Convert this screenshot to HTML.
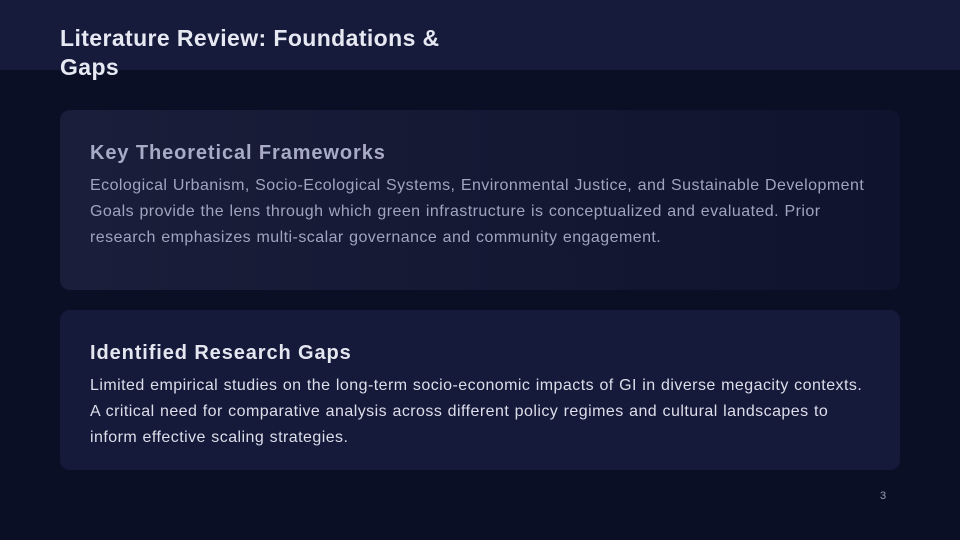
<!DOCTYPE html>
<html><head><meta charset="utf-8"><style>
*{margin:0;padding:0;box-sizing:border-box}
body{width:960px;height:540px;background:#0b0f26;font-family:"Liberation Sans",sans-serif;position:relative;overflow:hidden}
.top{position:absolute;left:0;top:0;width:960px;height:70px;background:#161a3b}
h1{position:absolute;left:60px;top:24px;width:420px;color:#e6e8f2;font-size:23px;line-height:29px;font-weight:bold;letter-spacing:0.4px}
.card{position:absolute;left:60px;width:840px;border-radius:10px;padding:0 30px}
.c1{top:110px;height:180px;background:linear-gradient(90deg,#1a1e3a,#0f132d);}
.c2{top:310px;height:160px;background:#161a3a}
h2{font-size:20px;font-weight:bold;margin-top:31px;line-height:24px;letter-spacing:0.9px}
p{font-size:16px;line-height:26px;margin-top:8px;letter-spacing:0.45px;word-spacing:0.5px;white-space:nowrap}
.c1 h2{color:#a8abc6}.c1 p{color:#a0a4bf}
.c2 h2{color:#e4e6f0}.c2 p{color:#dcdeea}
.n{position:absolute;left:880px;top:490px;color:#9a9db6;font-size:11px}
</style></head><body>
<div class="top"></div>
<h1>Literature Review: Foundations &amp; Gaps</h1>
<div class="card c1"><h2>Key Theoretical Frameworks</h2><p>Ecological Urbanism, Socio-Ecological Systems, Environmental Justice, and Sustainable Development<br>Goals provide the lens through which green infrastructure is conceptualized and evaluated. Prior<br>research emphasizes multi-scalar governance and community engagement.</p></div>
<div class="card c2"><h2>Identified Research Gaps</h2><p>Limited empirical studies on the long-term socio-economic impacts of GI in diverse megacity contexts.<br>A critical need for comparative analysis across different policy regimes and cultural landscapes to<br>inform effective scaling strategies.</p></div>
<div class="n">3</div>
</body></html>
